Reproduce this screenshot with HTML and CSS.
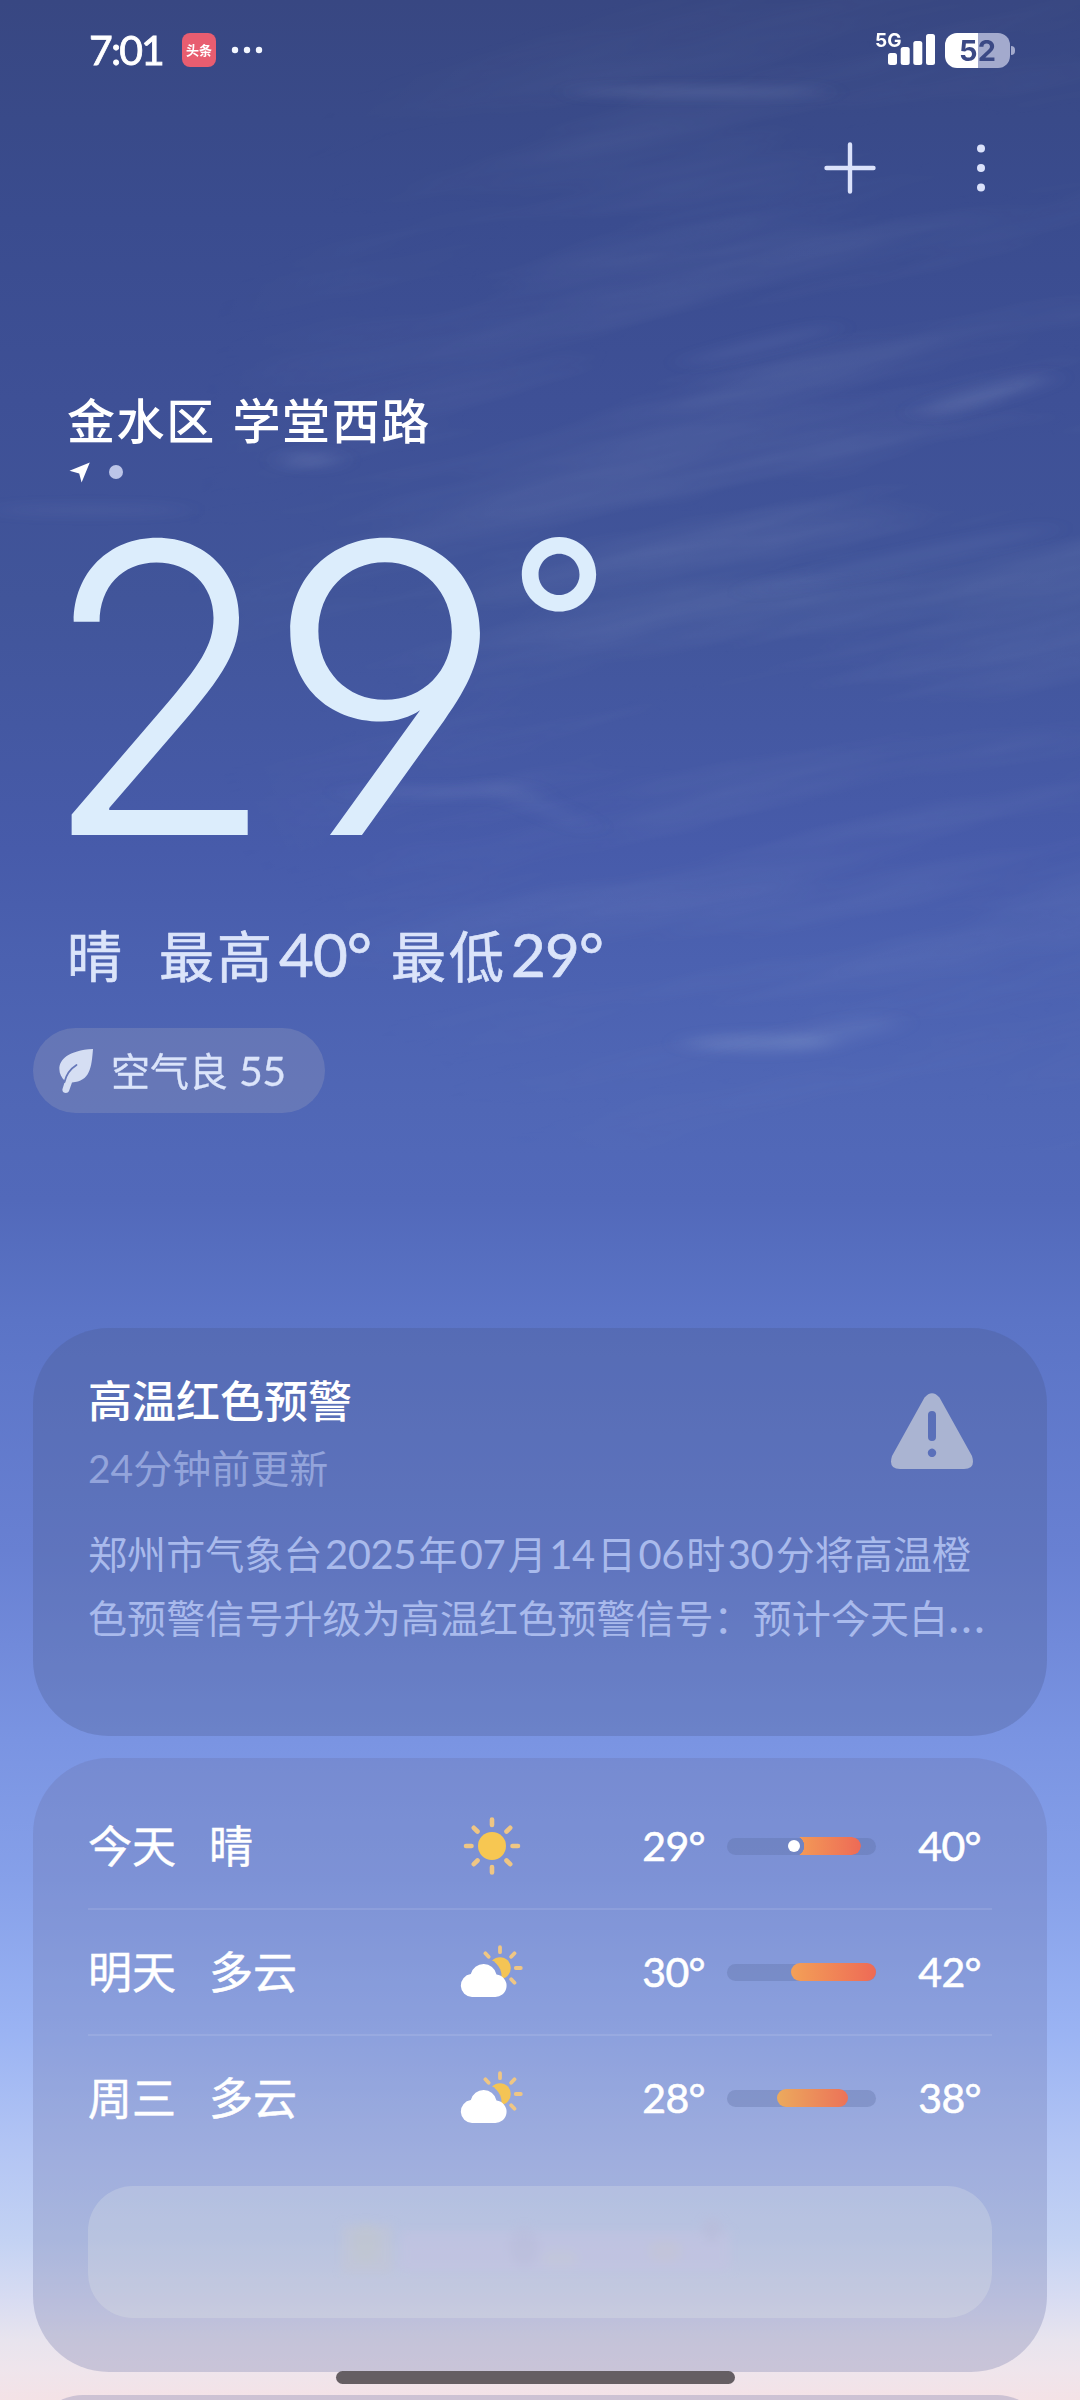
FILE: index.html
```html
<!DOCTYPE html>
<html lang="zh-CN">
<head>
<meta charset="utf-8">
<title>天气</title>
<link rel="stylesheet" href="styles.css">
</head>
<body>
<div class="screen">
  <svg class="sky" viewBox="0 0 1080 1400" aria-hidden="true">
    <defs>
      <filter id="streaks" x="0" y="0" width="100%" height="100%">
        <feTurbulence type="fractalNoise" baseFrequency="0.0022 0.017" numOctaves="4" seed="11"/>
        <feColorMatrix values="0 0 0 0 .66  0 0 0 0 .74  0 0 0 0 .88  1.5 0 0 0 -.6"/>
      </filter>
      <filter id="soft" x="-50%" y="-200%" width="200%" height="500%"><feGaussianBlur stdDeviation="14 6"/></filter>
      <radialGradient id="fade" cx=".76" cy=".48" r=".6">
        <stop offset="0" stop-color="#fff" stop-opacity=".16"/>
        <stop offset=".6" stop-color="#fff" stop-opacity=".1"/>
        <stop offset="1" stop-color="#fff" stop-opacity="0"/>
      </radialGradient>
      <mask id="area"><rect width="1080" height="1150" fill="url(#fade)"/></mask>
    </defs>
    <g mask="url(#area)">
      <g transform="rotate(-12 540 600)"><rect x="-200" y="-150" width="1500" height="1500" filter="url(#streaks)"/></g>
    </g>
    <g fill="#b4c3e6" filter="url(#soft)">
      <ellipse cx="700" cy="92" rx="130" ry="4" opacity=".2"/>
      <ellipse cx="310" cy="460" rx="28" ry="7" opacity=".16"/>
      <ellipse cx="90" cy="510" rx="100" ry="5" opacity=".08"/>
      <ellipse cx="985" cy="395" rx="70" ry="6" opacity=".2" transform="rotate(-16 985 395)"/>
      <ellipse cx="760" cy="345" rx="80" ry="5" opacity=".12" transform="rotate(-14 760 345)"/>
      <ellipse cx="900" cy="560" rx="160" ry="6" opacity=".1" transform="rotate(-12 900 560)"/>
      <ellipse cx="440" cy="792" rx="100" ry="4" opacity=".12"/>
      <ellipse cx="540" cy="806" rx="60" ry="5" opacity=".1" transform="rotate(24 540 806)"/>
      <ellipse cx="760" cy="1043" rx="75" ry="9" opacity=".18"/>
      <ellipse cx="840" cy="1032" rx="60" ry="10" opacity=".1" transform="rotate(-10 840 1032)"/>
    </g>
  </svg>

  <header class="status">
    <div class="status-left">
      <span class="clock">7:01</span>
      <span class="app-badge">头条</span>
      <svg width="32" height="8" viewBox="0 0 32 8" fill="#f3f7ff"><circle cx="4" cy="4" r="3.2"/><circle cx="16" cy="4" r="3.2"/><circle cx="28" cy="4" r="3.2"/></svg>
    </div>
    <div class="status-right">
      <div class="signal">
        <span class="net">5G</span>
        <svg width="48" height="32" viewBox="0 0 48 32" fill="#fff"><rect x="0" y="19" width="9" height="12" rx="2.5"/><rect x="12.7" y="13" width="9" height="18" rx="2.5"/><rect x="25.3" y="7" width="9" height="24" rx="2.5"/><rect x="38" y="0" width="9" height="31" rx="2.5"/></svg>
      </div>
      <div class="battery"><span class="level">52</span></div>
      <span class="nub"></span>
    </div>
  </header>

  <nav class="toolbar">
    <svg width="52" height="52" viewBox="0 0 52 52" stroke="#dbe2fb" stroke-width="4.4" stroke-linecap="round"><path d="M26 2.5v47M2.5 26h47"/></svg>
    <svg width="10" height="50" viewBox="0 0 10 50" fill="#dbe2fb"><circle cx="5" cy="5.5" r="4"/><circle cx="5" cy="25" r="4"/><circle cx="5" cy="44.5" r="4"/></svg>
  </nav>

  <section class="now">
    <h1 class="place">金水区 学堂西路</h1>
    <div class="pager">
      <svg width="22" height="21" viewBox="0 0 22 21"><path d="M.5 8.8 20.8.4 12.6 20.4 10.2 11.5Z" fill="#fff"/></svg>
      <span class="dot"></span>
    </div>
    <div class="temp"><span class="two">2</span><span class="nine">9</span><span class="deg">°</span></div>
    <div class="cond"><span class="sky-word">晴</span><span>最高<b class="num">40°</b></span><span>最低<b class="num">29°</b></span></div>
    <div class="air">
      <svg width="38" height="46" viewBox="0 0 38 46"><path d="M37 1C35.500 20 34 33 16 34.500L13 43C12 46 5.500 45.500 6.500 41L9 33C-1 24 -1 3 37 1Z" fill="#d5def3"/><path d="M20.500 17Q11 23 8.500 34" fill="none" stroke="#6678b9" stroke-width="1.800" stroke-linecap="round"/></svg>
      <span>空气良 <b class="num">55</b></span>
    </div>
  </section>

  <section class="card alert">
    <div class="alert-head">
      <div>
        <h2 class="alert-title">高温红色预警</h2>
        <p class="alert-time">24分钟前更新</p>
      </div>
      <svg class="warn" width="84" height="78" viewBox="0 0 84 78"><path fill="#aab4d2" fill-rule="evenodd" d="M34.500 5.500Q42-3 49.500 5.500L82 64Q86 77 74 77H10Q-2 77 2 64ZM38 23v22a4 4 0 0 0 8 0V23a4 4 0 0 0-8 0ZM42 56.600a4.200 4.200 0 1 0 .01 0Z"/></svg>
    </div>
    <p class="alert-text">郑州市气象台<i>2025</i>年<i>07</i>月<i>14</i>日<i>06</i>时<i>30</i>分将高温橙<br>色预警信号升级为高温红色预警信号：预计今天白<em>...</em></p>
  </section>

  <section class="card forecast">
    <div class="day">
      <span>今天</span><span>晴</span>
      <svg class="icon" width="64" height="64" viewBox="-32 -32 64 64"><circle r="14" fill="#f7c752"/><g stroke="#efc684" stroke-width="4.600" stroke-linecap="round"><path d="M0-21v-5.500M0 21v5.500M-20.500 0h-5.500M20.500 0h5.500M14.500-14.500l3.700-3.700M-14.500-14.500l-3.700-3.700M14.500 14.500l3.700 3.700M-14.500 14.500l-3.700 3.700"/></g></svg>
      <span class="low">29°</span>
      <span class="bar"><span class="range now-range" style="left:64px;width:70px"></span><span class="pin"></span></span>
      <span class="high">40°</span>
    </div>
    <div class="day">
      <span>明天</span><span>多云</span>
      <svg class="icon" width="64" height="64" viewBox="0 0 64 64"><use href="#partly"/></svg>
      <span class="low">30°</span>
      <span class="bar"><span class="range" style="left:64px;width:85px"></span></span>
      <span class="high">42°</span>
    </div>
    <div class="day">
      <span>周三</span><span>多云</span>
      <svg class="icon" width="64" height="64" viewBox="0 0 64 64">
        <defs>
          <mask id="cut"><rect width="64" height="64" fill="#fff"/><circle cx="24" cy="36" r="17.500"/></mask>
          <g id="partly">
            <g mask="url(#cut)"><circle cx="40" cy="28" r="10.800" fill="#f4c455"/></g>
            <g stroke="#efc684" stroke-width="3.800" stroke-linecap="round"><path d="M40 12.200V7.200M55.800 28h5M51.200 16.800l3.300-3.500M51.200 39.200l3.300 3.500M28.600 16.800l-3.200-3.500"/></g>
            <path d="M12 57a11.500 11.500 0 0 1-1.200-22.900A13.200 13.200 0 0 1 36.500 34.500 11.300 11.300 0 0 1 34 57Z" fill="#fff"/>
          </g>
        </defs>
        <use href="#partly"/>
      </svg>
      <span class="low">28°</span>
      <span class="bar"><span class="range warm" style="left:50px;width:71px"></span></span>
      <span class="high">38°</span>
    </div>
    <div class="more">
      <svg width="440" height="110" viewBox="0 0 440 110" aria-hidden="true">
        <defs><filter id="smear"><feGaussianBlur stdDeviation="5"/></filter></defs>
        <g filter="url(#smear)" opacity=".5">
          <rect x="22" y="28" width="50" height="48" fill="#c5c6d2"/>
          <ellipse cx="46" cy="46" rx="13" ry="20" fill="#c6c8c8"/>
          <rect x="80" y="34" width="330" height="40" fill="#c5c3e2"/>
          <ellipse cx="204" cy="50" rx="14" ry="20" fill="#bdbcdc"/>
          <ellipse cx="345" cy="54" rx="16" ry="12" fill="#c9c4d6"/>
          <ellipse cx="392" cy="32" rx="10" ry="11" fill="#babad8"/>
          <ellipse cx="240" cy="62" rx="18" ry="8" fill="#c9c8d8"/>
        </g>
      </svg>
    </div>
  </section>

  <section class="card next"></section>
  <div class="home"></div>
</div>
</body>
</html>
```
FILE: styles.css
```css
* { box-sizing: border-box; margin: 0; padding: 0; }
body { background: #38477f; }
b, i, em { font-weight: inherit; font-style: normal; }

.screen {
  position: relative;
  width: 1080px;
  height: 2400px;
  overflow: hidden;
  color: #fff;
  font-family: Lato, "Noto Sans CJK SC", sans-serif;
  background: linear-gradient(180deg, #384782 0, #394a89 120px, #3a4c8f 220px, #3e5096 400px, #41559a 600px, #475baa 850px, #4b61b0 960px, #5067b6 1110px, #5269ba 1200px, #5b74c6 1320px, #6880d2 1550px, #7a94e2 1740px, #86a0e9 1880px, #9ab3f3 2030px, #b3c5f4 2150px, #c3d2f3 2240px, #d8dcf2 2300px, #e8e4ee 2340px, #efe5ec 2370px, #f4e2e6 2400px);
}
.sky { position: absolute; left: 0; top: 0; width: 1080px; height: 1400px; }

/* status bar */
.status {
  position: relative;
  height: 100px;
  padding: 0 65px 0 89px;
  display: flex;
  justify-content: space-between;
  align-items: center;
}
.status-left, .status-right { display: flex; align-items: center; }
.clock { font-size: 41px; line-height: 52px; width: 93px; letter-spacing: -1.9px; -webkit-text-stroke: .8px #fff; }
.app-badge {
  width: 34px; height: 34px; border-radius: 8px;
  margin-right: 15px;
  background: #e85d70;
  font: 700 13px/34px "Noto Sans CJK SC", sans-serif;
  text-align: center;
}
.signal { position: relative; width: 60px; height: 32px; display: flex; justify-content: flex-end; margin-right: 9px; }
.net { position: absolute; left: -1px; top: -4px; font: 700 19px/22px Inter, sans-serif; }
.battery {
  width: 65px; height: 35px; border-radius: 12px;
  background: linear-gradient(90deg, #fff 0 33px, #a3aacd 33px);
  text-align: center;
}
.level { font: 700 29px/35px Inter, sans-serif; color: #3b4985; }
.nub { width: 4px; height: 9px; margin-left: 1px; border-radius: 0 4px 4px 0; background: #a3aacd; }

.toolbar {
  position: relative;
  height: 135px;
  padding: 0 94px 0 0;
  display: flex;
  justify-content: flex-end;
  align-items: center;
  gap: 100px;
}

/* current conditions */
.now { position: relative; padding: 156px 0 0 67px; }
.place { font-size: 48px; font-weight: 500; line-height: 60px; letter-spacing: 1.6px; word-spacing: 3px; }
.pager { display: flex; align-items: center; gap: 18px; height: 22px; margin: 10px 0 0 2px; }
.dot { width: 14px; height: 14px; border-radius: 50%; background: #bcc5e8; }
.temp {
  display: flex;
  height: 408px;
  margin: 2px 0 0 -28px;
  font: 300 403px/408px Inter, sans-serif;
  font-feature-settings: "cv04";
  color: #dcedfc;
}
.two { margin-right: -17px; transform: scaleX(.96); transform-origin: 32px 50%; }
.nine { transform: scaleX(1.05); }
.deg { font-size: 226px; line-height: 226px; font-weight: 400; margin: 23px 0 0 6px; }
.cond { display: flex; margin-top: 28px; font-size: 55px; line-height: 70px; letter-spacing: 3px; color: #dbe4fa; -webkit-text-stroke: .7px #dbe4fa; }
.sky-word { width: 92px; }
.cond .num { font-size: 60px; line-height: 60px; letter-spacing: -.8px; margin: 0 20px 0 4px; }
.air {
  display: flex; align-items: center;
  width: 292px; height: 85px;
  margin: 37px 0 0 -34px;
  padding-left: 23px;
  border-radius: 43px;
  background: rgba(160, 165, 190, .28);
  font-size: 39px; line-height: 50px; color: #dbe4fa;
  -webkit-text-stroke: .3px #dbe4fa;
}
.air svg { margin-right: 17px; }
.air .num { font-size: 41px; margin-left: 1px; letter-spacing: -.5px; }

/* cards */
.card { position: relative; width: 1014px; margin-left: 33px; border-radius: 76px; background: rgba(104, 110, 166, .28); }
.alert { height: 408px; margin-top: 215px; padding: 48px 55px; background: rgba(71, 85, 138, .28); }
.alert-head { display: flex; justify-content: space-between; height: 150px; }
.alert-title { font-size: 44px; line-height: 50px; font-weight: 500; }
.alert-time { font-size: 39px; line-height: 50px; margin-top: 17px; color: #93a4db; }
.warn { margin: 16px 18px 0 0; }
.alert-text { font-size: 39px; line-height: 64px; margin-top: -4px; color: #a9baec; white-space: nowrap; letter-spacing: .1px; }
.alert-text i { font-size: 40px; margin: 0 2.300px; letter-spacing: -.4px; }
.alert-text em { letter-spacing: 2px; font-size: 46px; line-height: 40px; }

.forecast { height: 614px; margin-top: 22px; padding: 26px 55px 0; }
.day {
  display: grid;
  grid-template-columns: 121px 251px 64px 203px 149px 1fr;
  align-items: center;
  height: 126px;
  border-bottom: 2px solid rgba(255, 255, 255, .1);
  font-size: 44px; line-height: 50px;
  -webkit-text-stroke: .5px #fff;
}
.day:nth-child(3) { border-bottom-color: transparent; }
.low, .high { font-size: 41px; letter-spacing: -.6px; text-align: right; -webkit-text-stroke: .6px #fff; }
.low { padding-right: 22px; }
.high { padding-right: 11px; }
.bar { position: relative; height: 17px; border-radius: 9px; background: rgba(90, 110, 160, .33); }
.range { position: absolute; top: -.5px; height: 18px; border-radius: 9px; background: linear-gradient(90deg, #f3a057, #ee6a56); }
.now-range { -webkit-mask: radial-gradient(circle at 3px 9px, transparent 10px, #000 10.500px); mask: radial-gradient(circle at 3px 9px, transparent 10px, #000 10.500px); }
.warm { background: linear-gradient(90deg, #ecaa5d, #ec7258); }
.pin { position: absolute; left: 61px; top: 2.500px; width: 12px; height: 12px; border-radius: 50%; background: #fff; }
.more { height: 132px; margin-top: 24px; border-radius: 45px; background: rgba(235, 240, 236, .24); display: flex; justify-content: center; align-items: center; }
.next { height: 100px; margin-top: 23px; }

.home { position: absolute; left: 336px; top: 2371px; width: 399px; height: 13px; border-radius: 7px; background: #655e63; }
```
